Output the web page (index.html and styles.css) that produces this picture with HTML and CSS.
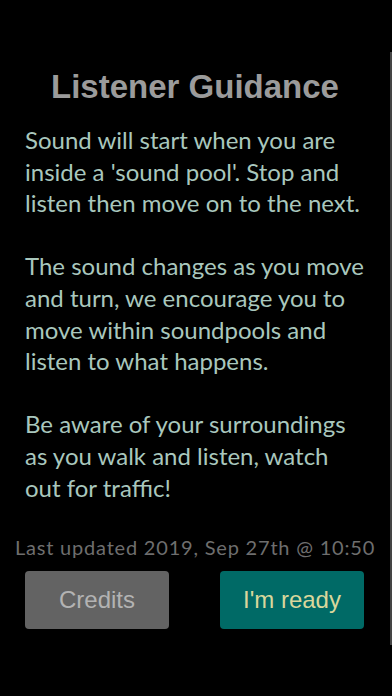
FILE: index.html
```html
<!DOCTYPE html>
<html lang="en">
<head>
<meta charset="utf-8">
<title>Listener Guidance</title>
<link rel="stylesheet" href="styles.css">
</head>
<body>
<div class="screen">
  <div class="panel">
    <h1 class="title">Listener Guidance</h1>
    <div class="guidance">
      <p>Sound will start when you are<br>inside a 'sound pool'. Stop and<br>listen then move on to the next.</p>
      <p>The sound changes as you move<br>and turn, we encourage you to<br>move within soundpools and<br>listen to what happens.</p>
      <p>Be aware of your surroundings<br>as you walk and listen, watch<br>out for traffic!</p>
    </div>
    <div class="updated">Last updated 2019, Sep 27th @ 10:50</div>
    <div class="actions">
      <button class="btn btn-credits">Credits</button>
      <button class="btn btn-ready">I'm ready</button>
    </div>
  </div>
</div>
</body>
</html>
```

FILE: styles.css
```css
html, body {
  margin: 0;
  padding: 0;
  background: #000;
}
.screen {
  width: 392px;
  height: 696px;
  padding-top: 52px;
  box-sizing: border-box;
}
.panel {
  height: 593px;
  border-right: 2px solid #454545;
  box-sizing: border-box;
  display: flex;
  flex-direction: column;
}
.title {
  margin: 16.6px 0 0;
  text-align: center;
  font-family: "Liberation Sans", Arial, sans-serif;
  font-weight: bold;
  font-size: 33px;
  line-height: 36px;
  color: #9b9b9b;
  padding-right: 0;
}
.guidance {
  margin-top: 19.4px;
  padding-left: 25px;
  font-family: Lato, "Noto Sans", sans-serif;
  font-size: 24px;
  line-height: 31.6px;
  color: #a9c7bd;
}
.guidance p {
  margin: 0 0 31.6px;
}
.guidance p:last-child {
  margin-bottom: 0;
}
.updated {
  margin-top: 32.1px;
  text-align: center;
  font-family: Lato, "Noto Sans", sans-serif;
  font-size: 20px;
  letter-spacing: 0.8px;
  line-height: 24px;
  color: #6e6e6e;
}
.actions {
  margin-top: 11.7px;
  display: flex;
  justify-content: space-between;
  padding: 0 26px 0 25px;
}
.btn {
  width: 144px;
  height: 58px;
  border: none;
  border-radius: 4px;
  font-family: "Liberation Sans", Arial, sans-serif;
  font-size: 24px;
  padding: 0;
}
.btn-credits {
  background: #636363;
  color: #b3b3b3;
}
.btn-ready {
  background: #006a66;
  color: #d9d79c;
}
```
